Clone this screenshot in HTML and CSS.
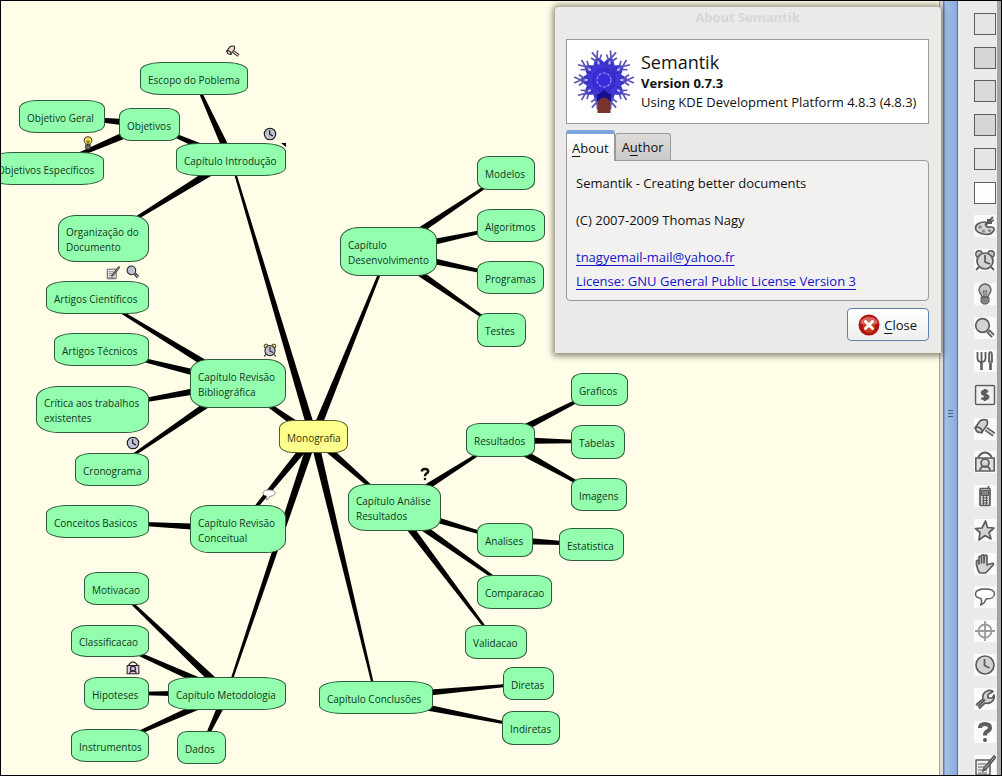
FILE: index.html
```html
<!DOCTYPE html>
<html lang="pt">
<head>
<meta charset="utf-8">
<title>Semantik</title>
<link rel="stylesheet" href="styles.css">
</head>
<body>
<svg class="sprite" aria-hidden="true">
  <symbol id="i-palette" viewBox="0 0 22 22"><path class="f" d="M1.500 13c0-4 5-6 9-6 3 0 3 2 1.500 3.500 0 2 3 1.500 5 1.500 3 0 4 2 2.500 4-2 3-6 4-10 3-5-1-8-3-8-6z"/><path class="s" d="M11 10l8-8M13 5h4M14 8l6-3M14 5v3h4"/><circle class="h" cx="6" cy="12" r="1.800"/><circle class="h" cx="9.500" cy="16" r="1.600"/><circle class="h" cx="15.500" cy="15.500" r="1.600"/></symbol>
  <symbol id="i-alarm" viewBox="0 0 22 22"><path class="s" d="M5 18l-3 3M17 18l3 3"/><circle class="b" cx="5" cy="5" r="3.200"/><circle class="b" cx="17" cy="5" r="3.200"/><circle class="f" cx="11" cy="12" r="8"/><path class="s" d="M11 6v7l5 2"/></symbol>
  <symbol id="i-bulb" viewBox="0 0 22 22"><path class="b" d="M8 14c0-3-3-4-3-7a6 6 0 0 1 12 0c0 3-3 4-3 7z"/><path class="t" d="M10 14v-4l-1-2h4l-1 2v4"/><path class="d" d="M7 14.500h8v4.500l-2 2h-4l-2-2z"/></symbol>
  <symbol id="i-zoom" viewBox="0 0 22 22"><circle class="f" cx="8.500" cy="8.500" r="6.800"/><path class="n" d="M14 14l5 5"/><path class="m" d="M15 15l4 4"/></symbol>
  <symbol id="i-fork" viewBox="0 0 22 22"><path class="k" d="M7.500 11v9"/><path class="s" d="M3.500 2v6q0 4 4 4t4-4V2M7.500 2v9"/><path class="k" d="M16.500 13v7"/><path class="f" d="M15 12V5q0-3 1.500-3t1.500 3v7z"/></symbol>
  <symbol id="i-money" viewBox="0 0 22 22"><rect class="p" x="1.500" y="1.500" width="19" height="19" rx="1"/><path class="k" d="M14 7.800Q12 6.500 10 7c-2.500.5-2.500 3 0 3.500l2 .5c3 1 3 3.500-.5 4q-2 .5-4-1M11 5v12"/></symbol>
  <symbol id="i-gavel" viewBox="0 0 22 22"><path class="n" d="M12 11l8 5.500"/><path class="m" d="M12 11l8 5.500"/><path class="f" d="M6 3q3-2 7-1 1 3 0 5l-5 7q-1-2-3-3t-4-1z"/><path class="f" d="M1.500 10q1-1.500 3.500-.5t3 3.500-1.500 1.500q-3 0-4-1.500t-1-3z"/></symbol>
  <symbol id="i-photo" viewBox="0 0 22 22"><path class="s" d="M4 7q2-5 7-5.500 5 .5 7 5.500"/><rect class="g" x="1.800" y="7" width="18.400" height="13"/><circle class="f" cx="11" cy="12" r="4"/><path class="s" d="M6 19.500q0-3 3-4h4q3 1 3 4"/></symbol>
  <symbol id="i-phone" viewBox="0 0 22 22"><path class="s" d="M14.500 4V1"/><rect class="f" x="6" y="3.500" width="10" height="17" rx="1"/><rect class="d" x="7.500" y="5.500" width="7" height="5"/><path class="t" d="M8 13h6M8 15.500h6M8 18h6M9.500 11v9M12.500 11v9"/></symbol>
  <symbol id="i-star" viewBox="0 0 22 22"><path class="f" d="M11.500 2l2 6.500 6.500.5-5 4.500 2 6.500-6-3.500-6 4.500 1-7.500-4.500-4 6.500-.5z"/></symbol>
  <symbol id="i-hand" viewBox="0 0 22 22"><path class="f" d="M5 19c-2-4-3-7-2.500-11q1-1 2 0l.5 3V4q1-1.500 2.500 0v6V2.500q1.500-1.500 2.500 0V10l.5-7.500q1.500-1 2.500.5L13 12l4.500-1.500q2-.5 2 1l-5 5.500-3 3H6z"/></symbol>
  <symbol id="i-talk" viewBox="0 0 22 22"><path class="w" d="M11 3c6 0 9.500 2 9.500 5s-3.500 5-8.500 5c-1 3-2 5-5.500 6 1.500-2 1.500-4 .5-6.500-4-.5-5.500-2.500-5.500-4.500 0-3 3.500-5 9.500-5z"/></symbol>
  <symbol id="i-target" viewBox="0 0 22 22"><g opacity=".6"><circle class="s" cx="11" cy="11" r="6.500"/><path class="s" d="M11 1v20M1 11h20"/></g></symbol>
  <symbol id="i-clock" viewBox="0 0 22 22"><circle class="f" cx="11" cy="11" r="9"/><path class="s" d="M10.500 5v6.500l5 2.500"/></symbol>
  <symbol id="i-wrench" viewBox="0 0 22 22"><path class="f" d="M2 17l7-6q-1-6 4-8 3-1.500 6 .5l-5 3v3.500h4.500l1.500-3q1 4-2 6.500t-7 1.500L5 20.500"/><path class="s" d="M4 18.500l7-7"/></symbol>
  <symbol id="i-help" viewBox="0 0 22 22"><path class="q" d="M6 7q0-4 5-4t5 4q0 2-3 3.500-2 1-2 4"/><circle class="o" cx="11" cy="19" r="2"/></symbol>
  <symbol id="i-note" viewBox="0 0 22 22"><rect class="p" x="2" y="5" width="14" height="15"/><path class="t" d="M4 9h8M4 12h6M4 15h9M4 18h9"/><path class="s" d="M20 1l1.500 1.500L12 14l-3 2 1-3z"/></symbol>
</svg>

<div class="window">
  <main class="canvas" id="canvas">
    <svg class="edges" id="edges" aria-hidden="true"></svg>
  </main>
  <div class="splitter" role="separator" aria-orientation="vertical"><span class="grip"></span></div>
  <aside class="tools" aria-label="Ferramentas">
    <div class="tools-list">
      <button class="swatch s1" aria-label="Cor 1"></button>
      <button class="swatch s2" aria-label="Cor 2"></button>
      <button class="swatch s3" aria-label="Cor 3"></button>
      <button class="swatch s2" aria-label="Cor 4"></button>
      <button class="swatch s1" aria-label="Cor 5"></button>
      <button class="swatch s4" aria-label="Cor 6"></button>
      <button class="tool" aria-label="Paleta"><svg class="icon"><use href="#i-palette"/></svg></button>
      <button class="tool" aria-label="Alarme"><svg class="icon"><use href="#i-alarm"/></svg></button>
      <button class="tool" aria-label="Ideia"><svg class="icon"><use href="#i-bulb"/></svg></button>
      <button class="tool" aria-label="Lupa"><svg class="icon"><use href="#i-zoom"/></svg></button>
      <button class="tool" aria-label="Talheres"><svg class="icon"><use href="#i-fork"/></svg></button>
      <button class="tool" aria-label="Dinheiro"><svg class="icon"><use href="#i-money"/></svg></button>
      <button class="tool" aria-label="Martelo"><svg class="icon"><use href="#i-gavel"/></svg></button>
      <button class="tool" aria-label="Quadro"><svg class="icon"><use href="#i-photo"/></svg></button>
      <button class="tool" aria-label="Telefone"><svg class="icon"><use href="#i-phone"/></svg></button>
      <button class="tool" aria-label="Estrela"><svg class="icon"><use href="#i-star"/></svg></button>
      <button class="tool" aria-label="Pare"><svg class="icon"><use href="#i-hand"/></svg></button>
      <button class="tool" aria-label="Conversa"><svg class="icon"><use href="#i-talk"/></svg></button>
      <button class="tool" aria-label="Alvo"><svg class="icon"><use href="#i-target"/></svg></button>
      <button class="tool" aria-label="Tempo"><svg class="icon"><use href="#i-clock"/></svg></button>
      <button class="tool" aria-label="Chave"><svg class="icon"><use href="#i-wrench"/></svg></button>
      <button class="tool" aria-label="Ajuda"><svg class="icon"><use href="#i-help"/></svg></button>
      <button class="tool" aria-label="Nota"><svg class="icon"><use href="#i-note"/></svg></button>
    </div>
  </aside>

  <section class="dialog" role="dialog" aria-labelledby="dlg-title">
    <h1 class="dialog-title" id="dlg-title">About Semantik</h1>
    <div class="about-head">
      <svg class="logo" viewBox="0 0 64 64" aria-hidden="true">
        <defs><g id="ray"><path d="M32 31L42 21 54 28.500 56 31 54 33.500 42 41z" fill="#4038d4"/><path d="M52 31h5M55 31l7-3M55 31l7 3M52 29.500l5-4M52 32.500l5 4" stroke="#5a55b4" stroke-width="1.700" fill="none"/><path d="M40 31l10-3M40 31l10 3" stroke="#2d22a8" stroke-width=".8"/><ellipse cx="50" cy="31" rx="1.800" ry="1.200" fill="#b4b2f0"/></g></defs>
        <use href="#ray"/><use href="#ray" transform="rotate(36 32 31)"/><use href="#ray" transform="rotate(72 32 31)"/><use href="#ray" transform="rotate(108 32 31)"/><use href="#ray" transform="rotate(144 32 31)"/><use href="#ray" transform="rotate(180 32 31)"/><use href="#ray" transform="rotate(216 32 31)"/><use href="#ray" transform="rotate(252 32 31)"/><use href="#ray" transform="rotate(288 32 31)"/><use href="#ray" transform="rotate(324 32 31)"/>
        <circle cx="32" cy="31" r="12" fill="#3a2cd6"/>
        <circle cx="32" cy="31" r="11" fill="none" stroke="#3226b8" stroke-width="1" stroke-dasharray="3 2"/>
        <circle cx="32" cy="31" r="7" fill="none" stroke="#9a94ea" stroke-width="1.200" stroke-dasharray="3 1.500"/>
        <path d="M25 52v-6l7-5 7 5v6z" fill="#1c0f8c"/>
        <path d="M25.500 64V53l4-4h5l4 4v11z" fill="#7a332c"/>
      </svg>
      <div class="about-text">
        <p class="app-name">Semantik</p>
        <p class="app-version">Version 0.7.3</p>
        <p class="app-platform">Using KDE Development Platform 4.8.3 (4.8.3)</p>
      </div>
    </div>
    <div class="tabs" role="tablist">
      <button class="tab active" role="tab" aria-selected="true"><u>A</u>bout</button>
      <button class="tab" role="tab" aria-selected="false">A<u>u</u>thor</button>
    </div>
    <div class="panel" role="tabpanel">
      <p>Semantik - Creating better documents</p>
      <p>(C) 2007-2009 Thomas Nagy</p>
      <p class="links"><a href="mailto:tnagyemail-mail@yahoo.fr">tnagyemail-mail@yahoo.fr</a></p>
      <p class="links"><a href="#license">License: GNU General Public License Version 3</a></p>
    </div>
    <div class="actions">
      <button class="close"><svg class="close-icon" viewBox="0 0 22 22" aria-hidden="true"><circle cx="11" cy="11" r="10.500" fill="#b01313"/><path d="M2 9a9.200 8 0 0 1 18 0q-9 5-18 0z" fill="#d8655c"/><circle cx="11" cy="13" r="6" fill="#d84a16" opacity=".7"/><path d="M7.500 7.500l7 7M14.500 7.500l-7 7" stroke="#fff" stroke-width="3" stroke-linecap="round"/></svg><span><u>C</u>lose</span></button>
    </div>
  </section>
</div>
<script src="map.js"></script>
</body>
</html>
```
FILE: styles.css
```css
* { box-sizing: border-box; }

body {
  margin: 0;
  font-family: "Open Sans", "Noto Sans", sans-serif;
  font-size: 13px;
  color: #111;
  background: #ebeae9;
}

p, h1 { margin: 0; }
button { font: inherit; color: inherit; padding: 0; }
.sprite { position: absolute; width: 0; height: 0; }

.window {
  position: relative;
  display: flex;
  height: 100vh;
  overflow: hidden;
}
.window::after {
  content: "";
  position: absolute;
  inset: 0;
  border: 1px solid #000;
  pointer-events: none;
}

/* Mind map */
.canvas {
  position: relative;
  flex: 1;
  min-width: 0;
  overflow: hidden;
  background: #fffde8;
  border-right: 1px solid #a5a5a2;
}
.edges { position: absolute; inset: 0; width: 100%; height: 100%; fill: #000; }
.node {
  position: absolute;
  display: flex;
  align-items: center;
  padding: 3px 0 0 7px;
  border: 1px solid #2f5a3c;
  border-radius: 20% / 26%;
  background: #93ffae;
  color: #10351c;
  font-size: 10px;
  line-height: 15px;
  white-space: pre;
}
.node.root { background: #ffff8c; border-color: #5a5a33; color: #33330c; }
.fold { position: absolute; width: 5px; height: 4px; background: #000; clip-path: polygon(0 0, 100% 0, 100% 100%); }

/* Icons */
.icon { display: block; width: 22px; height: 22px; }
.icon, .badge {
  --line: #5c5c5a;
  --fill: #d3d3d1;
  --bell: #c4c4c2;
  --dark: #858583;
  --frame: #e0e0de;
  stroke-linejoin: round;
}
.badge {
  --line: #222;
  --fill: #c0c0d4;
  --bell: #f4e04a;
  --dark: #666;
  --frame: #e8c8e4;
  position: absolute;
  width: 14px;
  height: 14px;
}
.badge.gavel { --fill: #f6ddd2; }
.badge.talk { --line: #777; }
.badge.note { --line: #555; }
.f { fill: var(--fill); stroke: var(--line); stroke-width: 1.7px; }
.b { fill: var(--bell); stroke: var(--line); stroke-width: 1.4px; }
.g { fill: var(--frame); stroke: var(--line); stroke-width: 1.6px; }
.w { fill: #fff; stroke: var(--line); stroke-width: 1.4px; }
.p { fill: #efefed; stroke: var(--line); stroke-width: 1.5px; }
.d { fill: var(--dark); stroke: var(--line); stroke-width: 1px; }
.h { fill: var(--dark); }
.s { fill: none; stroke: var(--line); stroke-width: 1.8px; }
.t { fill: none; stroke: var(--line); stroke-width: 1px; }
.k { fill: none; stroke: var(--line); stroke-width: 2.6px; }
.n { fill: none; stroke: var(--line); stroke-width: 4.6px; }
.m { fill: none; stroke: var(--fill); stroke-width: 1.6px; }
.q { fill: none; stroke: var(--line); stroke-width: 4px; }
.o { fill: var(--line); }
.badge.clock, .badge.help { --line: #111; }
.badge .f, .badge .q { stroke-linecap: round; }

/* Splitter and tool column */
.splitter {
  display: grid;
  place-items: center;
  flex: 0 0 18px;
  padding-top: 50px;
  border-left: 3px solid #dedddb;
  background: linear-gradient(90deg, #5f7da6 1px, #a3c2ea 2px, #86abde 14px, #4e74a8 14px);
}
.grip { width: 5px; height: 7px; background: repeating-linear-gradient(#3f5f8c 0 1px, transparent 1px 3px); }
.tools {
  flex: 0 0 44px;
  padding: 7px 4px 0 16px;
  display: flex;
  border-right: 5px solid #a3a5a2;
  overflow: hidden;
}
.tools-list {
  flex: 1;
  display: grid;
  grid-auto-rows: 1fr;
  align-items: center;
  margin-bottom: -7px;
}
.tool, .swatch { width: 22px; height: 22px; border: 0; }
.tool { background: #fafaf9; }
.swatch { border: 1px solid #5e5e5c; }
.s1 { background: #e4e4e2; }
.s2 { background: #d5d5d3; }
.s3 { background: #dadad8; }
.s4 { background: #fefefd; }

/* About dialog */
.dialog {
  position: absolute;
  left: 555px;
  top: 6px;
  width: 386px;
  padding: 0 12px 12px 11px;
  border-top: 1px solid #b5b4ab;
  border-radius: 4px 4px 0 0;
  background: #ebeae9;
  box-shadow: 0 1px 6px 2px rgba(70, 70, 55, .65);
}
.dialog-title {
  height: 32px;
  line-height: 20px;
  font-size: 13px;
  text-align: center;
  color: #d5d7db;
}
.about-head {
  display: flex;
  align-items: center;
  gap: 5px;
  height: 85px;
  padding: 0 5px 2px;
  border: 1px solid #9b9a98;
  background: #fff;
}
.logo { flex: none; width: 64px; height: 64px; }
.about-text { white-space: nowrap; line-height: 19px; }
.app-name { font-size: 18px; line-height: 24px; }
.app-version { font-weight: bold; }
.tabs { display: flex; align-items: flex-end; margin-top: 6px; }
.tab {
  height: 27px;
  padding: 0 6px;
  border: 1px solid #9b9a98;
  border-bottom: 0;
  border-radius: 3px 3px 0 0;
  background: linear-gradient(#dddcdb, #cbcac9);
}
.tab.active {
  position: relative;
  height: 31px;
  padding: 0 5px;
  margin-bottom: -1px;
  border-top: 4px solid #7ba3dc;
  background: linear-gradient(#fff, #f2f1f0);
}
.tab u, .close u { text-underline-offset: 3px; }
.panel {
  padding: 10px 9px 7px;
  border: 1px solid #9b9a98;
  border-radius: 0 4px 4px 4px;
  background: #f2f1f0;
  line-height: 24px;
}
.panel p + p { margin-top: 13px; }
.panel .links + .links { margin-top: 0; }
.panel a { color: #1414c8; text-underline-offset: 3px; }
.actions { display: flex; justify-content: flex-end; margin-top: 7px; }
.close {
  display: flex;
  align-items: center;
  gap: 4px;
  height: 33px;
  padding: 0 11px 0 10px;
  border: 1px solid #5f82b5;
  border-radius: 4px;
  background: linear-gradient(#fff, #eeeeed);
}
.close-icon { width: 22px; height: 22px; }
```
FILE: map.js
```js
// id: [parent, x, y, width, height, text]
const nodes = {
  root: [null, 279, 420, 69, 33, "Monografia"],
  intro: ["root", 176, 143, 110, 33, "Capítulo Introdução"],
  escopo: ["intro", 140, 62, 108, 33, "Escopo do Poblema"],
  objetivos: ["intro", 119, 108, 61, 33, "Objetivos"],
  geral: ["objetivos", 19, 100, 86, 33, "Objetivo Geral"],
  especificos: ["objetivos", -11, 152, 115, 33, "Objetivos Específicos"],
  organizacao: ["intro", 58, 215, 91, 47, "Organização do\nDocumento"],
  bibliografica: ["root", 190, 359, 96, 49, "Capítulo Revisão\nBibliográfica"],
  cientificos: ["bibliografica", 46, 281, 103, 33, "Artigos Científicos"],
  tecnicos: ["bibliografica", 54, 333, 95, 33, "Artigos Técnicos"],
  critica: ["bibliografica", 36, 386, 113, 47, "Crítica aos trabalhos\nexistentes"],
  cronograma: ["bibliografica", 75, 453, 74, 33, "Cronograma"],
  conceitual: ["root", 190, 505, 96, 48, "Capítulo Revisão\nConceitual"],
  conceitos: ["conceitual", 46, 505, 103, 33, "Conceitos Basicos"],
  metodologia: ["root", 168, 677, 118, 33, "Capítulo Metodologia"],
  motivacao: ["metodologia", 84, 572, 65, 33, "Motivacao"],
  classificacao: ["metodologia", 71, 625, 78, 32, "Classificacao"],
  hipoteses: ["metodologia", 84, 677, 65, 33, "Hipoteses"],
  instrumentos: ["metodologia", 71, 729, 78, 33, "Instrumentos"],
  dados: ["metodologia", 177, 731, 49, 33, "Dados"],
  desenvolvimento: ["root", 340, 227, 97, 49, "Capítulo\nDesenvolvimento"],
  modelos: ["desenvolvimento", 477, 156, 58, 34, "Modelos"],
  algoritmos: ["desenvolvimento", 477, 209, 68, 33, "Algoritmos"],
  programas: ["desenvolvimento", 477, 261, 67, 33, "Programas"],
  testes: ["desenvolvimento", 477, 313, 49, 34, "Testes"],
  analise: ["root", 348, 484, 93, 47, "Capítulo Análise\nResultados"],
  resultados: ["analise", 466, 423, 69, 34, "Resultados"],
  graficos: ["resultados", 571, 373, 57, 33, "Graficos"],
  tabelas: ["resultados", 571, 425, 54, 34, "Tabelas"],
  imagens: ["resultados", 571, 478, 56, 33, "Imagens"],
  analises: ["analise", 477, 523, 56, 34, "Analises"],
  estatistica: ["analises", 559, 528, 65, 33, "Estatistica"],
  comparacao: ["analise", 477, 575, 75, 34, "Comparacao"],
  validacao: ["analise", 465, 625, 62, 34, "Validacao"],
  conclusoes: ["root", 319, 681, 114, 33, "Capítulo Conclusões"],
  diretas: ["conclusoes", 503, 667, 51, 33, "Diretas"],
  indiretas: ["conclusoes", 502, 711, 58, 34, "Indiretas"]
};

const badges = [
  ["gavel", 226, 45], ["clock", 263, 127], ["bulb", 81, 136], ["note", 106, 266],
  ["zoom", 126, 265], ["alarm", 263, 343], ["clock", 126, 436], ["talk", 262, 488],
  ["help", 418, 467], ["photo", 126, 661]
];

const canvas = document.getElementById("canvas");
const edges = document.getElementById("edges");
const SVG = "http://www.w3.org/2000/svg";
const centre = ([, x, y, w, h]) => [x + w / 2, y + h / 2];

for (const node of Object.values(nodes)) {
  const [parent, x, y, w, h, text] = node;
  if (parent) {
    // Each branch tapers from the parent's centre to the child's.
    const [ax, ay] = centre(nodes[parent]);
    const [bx, by] = centre(node);
    const len = Math.hypot(bx - ax, by - ay);
    const nx = (by - ay) / len;
    const ny = (ax - bx) / len;
    const wide = 4;
    const thin = 1;
    const poly = document.createElementNS(SVG, "polygon");
    poly.setAttribute("points", [
      [ax + nx * wide, ay + ny * wide], [bx + nx * thin, by + ny * thin],
      [bx - nx * thin, by - ny * thin], [ax - nx * wide, ay - ny * wide]
    ].map(p => p.join(",")).join(" "));
    edges.append(poly);
  }
  const box = document.createElement("div");
  box.className = parent ? "node" : "node root";
  box.textContent = text;
  box.style.cssText = `left:${x}px;top:${y}px;width:${w}px;height:${h}px`;
  canvas.append(box);
}

for (const [name, x, y] of badges) {
  const svg = document.createElementNS(SVG, "svg");
  svg.setAttribute("class", `badge ${name}`);
  svg.style.cssText = `left:${x}px;top:${y}px`;
  const use = document.createElementNS(SVG, "use");
  use.setAttribute("href", `#i-${name}`);
  svg.append(use);
  canvas.append(svg);
}

const fold = document.createElement("span");
fold.className = "fold";
fold.style.cssText = "left:281px;top:143px";
canvas.append(fold);
```
